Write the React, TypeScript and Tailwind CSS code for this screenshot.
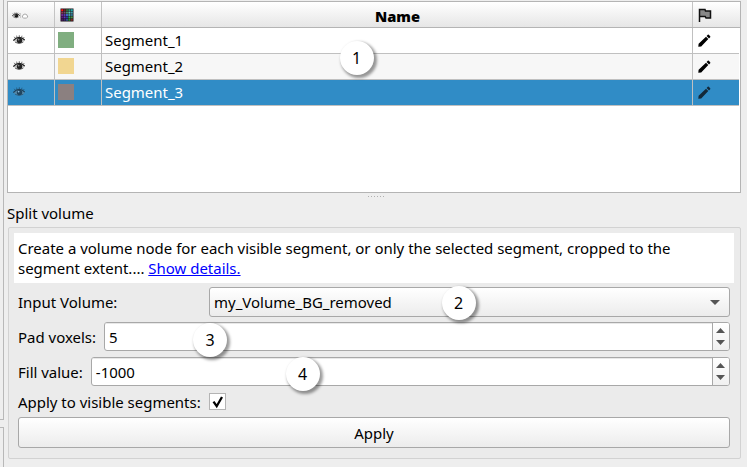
import React from "react";

const swatches = ["#ff1010", "#6a2828", "#3a6a38", "#2a9a78", "#20a8a8", "#903858", "#705070", "#489068", "#60d0c0", "#40a0a8", "#702890", "#5838a8", "#3868c0", "#48a0b0", "#307090", "#601880", "#6830c0", "#2838a0", "#28b058", "#489048", "#481858", "#382870", "#285090", "#289028", "#802828"];

function Eye({ className = "", color = "#222", iris = "#555" }: { className?: string; color?: string; iris?: string }) {
  return (
    <svg viewBox="0 0 12 10" className={className} fill="none">
      <path d="M.5 5.6Q3 2.3 6.2 2.3T11.6 5.4Q9.5 8.6 6.2 8.6T.5 5.6Z" fill="#888" fillOpacity=".45" />
      <path d="M.3 5.6Q3 2.4 6.2 2.4T11.7 5.2" stroke={color} strokeWidth="1.2" />
      <path d="M2 3 1.2 1.8M4 2.2 3.6.6M6.3 2V.2M8.5 2.3 9 .7M10.2 3.3 11.3 2M2 7.2Q6 10 10.2 7.2" stroke={color} strokeWidth=".6" />
      <circle cx="6.5" cy="5.4" r="2.7" fill={color} />
      <circle cx="5.6" cy="4.6" r=".9" fill={iris} />
    </svg>
  );
}

function Pencil({ color }: { color: string }) {
  return (
    <svg viewBox="0 0 13 13" className="size-[13px]" fill={color}>
      <path d="M.3 12.7.6 9.8 8 2.7 10.3 5 3.2 12.4ZM8.6 2 9.8.8Q10.3.4 10.8.8L12.2 2.2Q12.6 2.7 12.2 3.2L11 4.4Z" />
    </svg>
  );
}

function Badge({ n, className }: { n: number; className: string }) {
  return (
    <div className={`absolute flex size-[34px] items-center justify-center rounded-full bg-white text-[16px] leading-none shadow-[2px_2px_3px_1px_rgba(0,0,0,0.4)] ${className}`}>
      {n}
    </div>
  );
}

function Segment({ name, color, bg, selected = false }: { name: string; color: string; bg: string; selected?: boolean }) {
  return (
    <div className={`mr-px flex h-[26px] ${bg} ${selected ? "text-white" : "text-black"}`}>
      <div className="w-[47px] border-r border-b border-[#c0c0c0] pt-[7px] pl-[5px]">
        <Eye className="h-[10px] w-3" color={selected ? "#1f4560" : "#222"} iris={selected ? "#88bce0" : "#888"} />
      </div>
      <div className="w-[47px] border-r border-b border-[#c0c0c0] pt-1 pl-[3px]">
        <div className={`size-4 ${color}`} />
      </div>
      <div className="flex-1 border-r border-b border-[#c0c0c0] pl-[3px] leading-[25px]">{name}</div>
      <div className="w-[46px] border-b border-[#c0c0c0] pt-[6px] pl-[4.5px]">
        <Pencil color={selected ? "#13293a" : "#000"} />
      </div>
    </div>
  );
}

function Spin({ label, value }: { label: string; value: string }) {
  return (
    <div className="flex h-[29px] gap-2">
      <label className="leading-[30px]">{label}</label>
      <div className="flex flex-1 overflow-hidden rounded-[3px] border border-[#a8a8a8] bg-white">
        <div className="flex-1 border-t border-[#e8e8e8] pl-1 leading-[27px]">{value}</div>
        <div className="flex w-[17px] flex-col items-center justify-center gap-[7px] border-l border-[#a8a8a8] bg-linear-to-b from-white to-[#f0f0f0] pr-px">
          <svg viewBox="0 0 9 5" className="h-[5px] w-[9px]"><path d="M0 5 4.5 0 9 5Z" fill="#555" /></svg>
          <svg viewBox="0 0 9 5" className="h-[5px] w-[9px]"><path d="M0 0 4.5 5 9 0Z" fill="#555" /></svg>
        </div>
      </div>
    </div>
  );
}

export default function App() {
  return (
    <div className="relative flex h-[467px] w-[747px] overflow-hidden bg-[#eeeeee] font-['Noto_Sans',sans-serif] text-[14.98px] text-black">
      <div className="flex w-1 flex-col gap-[7px]">
        <div className="h-[420px] border-r border-b border-[#b8b8b8]" />
        <div className="flex-1 border-t border-r border-[#b8b8b8]" />
      </div>
      <main className="ml-[3px] w-[734px] pt-px">
        <div className="h-[192px] border border-[#b4b4b4] bg-white">
          <div className="flex h-[26px] border-b border-[#b4b4b4] bg-linear-to-b from-white to-[#e6e6e6]">
            <div className="flex w-[47px] items-center border-r border-[#c4c4c4] pt-[2px] pl-[3.5px]">
              <Eye className="h-[7px] w-2" color="#111" />
              <div className="h-[5px] w-px bg-[#ccc]" />
              <svg viewBox="0 0 8 6" className="h-[6px] w-2"><path d="M1.2 4Q1.8 1 4 1T6.8 4Q5.8 5.2 4 5.2T1.2 4Z" fill="#fff" stroke="#888" strokeWidth=".7" /></svg>
            </div>
            <div className="w-[47px] border-r border-[#c4c4c4] pt-[6px] pl-[5px]">
              <svg viewBox="0 0 14 14" className="size-[14px]">
                <rect x=".5" y=".5" width="13" height="13" fill="#181018" />
                {swatches.map((color, i) => <rect key={i} x={1.2 + (i % 5) * 2.4} y={1.2 + Math.floor(i / 5) * 2.4} width="2" height="2" fill={color} />)}
              </svg>
            </div>
            <div className="flex-1 border-r border-[#c4c4c4] pt-px pl-px text-center text-[14.67px] leading-[26px] font-black">Name</div>
            <div className="w-[47px] pt-[6px] pl-[5px]">
              <svg viewBox="0 0 14 14" className="size-[14px]"><path d="M1.5 14V1.5H7L7.5 3H12.5V10H8L7.2 8.5H1.5" fill="#888" stroke="#111" strokeWidth="1.5" /></svg>
            </div>
          </div>
          <Segment name="Segment_1" color="bg-[#80ae80]" bg="bg-white" />
          <Segment name="Segment_2" color="bg-[#f1d691]" bg="bg-[#f7f7f7]" />
          <Segment name="Segment_3" color="bg-[#8b8080]" bg="bg-[#308cc6]" selected />
        </div>
        <div className="flex h-[11px] justify-center gap-[2px] pt-[3px] pl-[3px]">
          {[0, 1, 2, 3, 4, 5].map((i) => <div key={i} className="size-px bg-[#b0b0b0]" />)}
        </div>
        <h2 className="h-[23px] leading-[18px]">Split volume</h2>
        <section className="ml-px h-[232px] w-[733px] rounded-[2px] border border-[#d2d2d2] bg-[#ebebeb] pt-[5px]">
          <p className="ml-[5px] h-[50px] w-[720px] bg-white pt-[5px] pl-1 leading-5">
            Create a volume node for each visible segment, or only the selected segment, cropped to the<br />segment extent.... <a className="text-[#0000ff] underline">Show details.</a>
          </p>
          <div className="mt-1 ml-[9px] w-[712px]">
            <div className="flex h-[30px]">
              <label className="w-[191px] leading-[31px]">Input Volume:</label>
              <div className="flex flex-1 items-center justify-between rounded-[3px] border border-[#a8a8a8] bg-linear-to-b from-white to-[#ececec] pr-[9px] pl-1">
                <span>my_Volume_BG_removed</span>
                <svg viewBox="0 0 10 5" className="h-[5px] w-[10px]"><path d="M0 0 5 5 10 0Z" fill="#555" /></svg>
              </div>
            </div>
            <div className="mt-[5px] flex flex-col gap-[6px]">
              <Spin label="Pad voxels:" value="5" />
              <Spin label="Fill value:" value="-1000" />
            </div>
            <div className="mt-[7px] flex h-[17px]">
              <label className="w-[191px] leading-[18px]">Apply to visible segments:</label>
              <div className="size-[17px] border border-[#b4b4b4] bg-white">
                <svg viewBox="0 0 15 15" className="size-[15px]"><path d="m3.5 7.7 3.2 4.5L12 3" fill="none" stroke="#000" strokeWidth="2.3" /></svg>
              </div>
            </div>
            <button className="mt-[7px] block h-[31px] w-full rounded-[3px] border border-[#a8a8a8] bg-linear-to-b from-white to-[#ececec] pt-[2px]">Apply</button>
          </div>
        </section>
      </main>
      <Badge n={1} className="top-[41px] left-[339.5px]" />
      <Badge n={2} className="top-[286px] left-[441.5px]" />
      <Badge n={3} className="top-[323px] left-[193px]" />
      <Badge n={4} className="top-[357px] left-[285.5px]" />
    </div>
  );
}
